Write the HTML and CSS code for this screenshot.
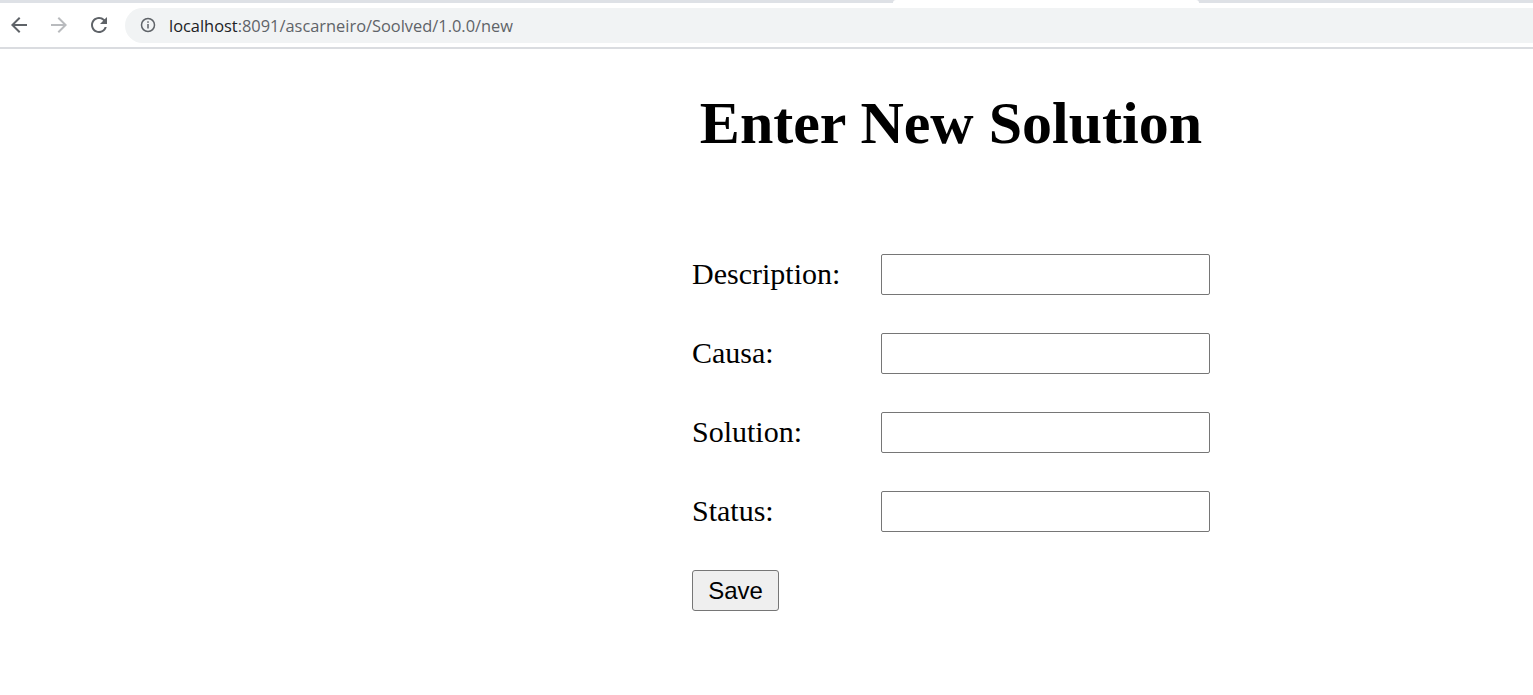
FILE: index.html
```html
<!DOCTYPE html>
<html>
<head>
<meta charset="utf-8">
<title>Enter New Solution</title>
<link rel="stylesheet" href="styles.css">
</head>
<body>
<div class="chrome">
  <div class="tabstrip">
    <div class="tab-left"></div>
    <div class="tab-active"></div>
    <div class="tab-right"></div>
  </div>
  <div class="toolbar">
    <div class="nav">
      <svg class="nav-icon" width="24" height="24" viewBox="0 0 24 24"><path d="M20 11H7.83l5.59-5.59L12 4l-8 8 8 8 1.41-1.41L7.83 13H20v-2z" fill="#5f6368"/></svg>
      <svg class="nav-icon" width="24" height="24" viewBox="0 0 24 24"><path d="M12 4l-1.41 1.41L16.17 11H4v2h12.17l-5.58 5.59L12 20l8-8z" fill="#b9bbbe"/></svg>
      <svg class="nav-icon" width="24" height="24" viewBox="0 0 24 24"><path d="M17.65 6.35A7.958 7.958 0 0 0 12 4c-4.42 0-7.990 3.58-7.990 8s3.570 8 7.990 8c3.73 0 6.840-2.550 7.730-6h-2.080A5.990 5.990 0 0 1 12 18c-3.310 0-6-2.690-6-6s2.690-6 6-6c1.660 0 3.140.690 4.220 1.780L13 11h7V4l-2.350 2.350z" fill="#5f6368"/></svg>
    </div>
    <div class="omnibox">
      <svg class="info" width="16" height="16" viewBox="0 0 16 16"><circle cx="8" cy="8" r="6.5" fill="none" stroke="#5f6368" stroke-width="1.5"/><rect x="7.25" y="7" width="1.5" height="4.5" fill="#5f6368"/><rect x="7.25" y="4.3" width="1.5" height="1.5" fill="#5f6368"/></svg>
      <span class="url"><span class="host">localhost</span>:8091/ascarneiro/Soolved/1.0.0/new</span>
    </div>
  </div>
</div>
<main class="page">
  <h1 class="title">Enter New Solution</h1>
  <form class="form">
    <div class="row"><label class="label">Description:</label><input class="field" type="text"></div>
    <div class="row"><label class="label">Causa:</label><input class="field" type="text"></div>
    <div class="row"><label class="label">Solution:</label><input class="field" type="text"></div>
    <div class="row"><label class="label">Status:</label><input class="field" type="text"></div>
    <div class="row"><button class="save" type="button">Save</button></div>
  </form>
</main>
</body>
</html>
```
FILE: styles.css
```css
html, body {
  margin: 0;
  padding: 0;
  background: #ffffff;
}
body {
  font-family: "Liberation Serif", "Times New Roman", serif;
  overflow: hidden;
}
.chrome {
  height: 49px;
  background: #ffffff;
}
.tabstrip {
  display: flex;
  height: 3px;
  background: #dee1e6;
}
.tab-left { width: 893px; }
.tab-active { width: 306px; background: #ffffff; border-radius: 6px 6px 0 0; }
.tab-right { flex: 1; }
.toolbar {
  display: flex;
  align-items: center;
  box-sizing: border-box;
  height: 46px;
  border-bottom: 2px solid #dadce0;
  padding-bottom: 0;
}
.nav {
  display: flex;
  align-items: center;
  gap: 16px;
  padding-left: 7px;
  width: 111px;
}
.nav-icon { display: block; }
.omnibox {
  flex: 1;
  height: 35px;
  margin-left: 7px;
  margin-right: -20px;
  background: #f1f3f4;
  border-radius: 18px;
  display: flex;
  align-items: center;
  padding-left: 15px;
}
.info { display: block; margin-right: 13px; }
.url {
  font-family: "Open Sans", "Noto Sans", sans-serif;
  font-size: 16.4px;
  color: #5f6368;
}
.host { color: #202124; }
.page {
  margin-left: 692px;
  width: 518px;
  display: flex;
  flex-direction: column;
}
.title {
  margin: 40px 0 0 0;
  font-size: 60px;
  line-height: 69px;
  font-weight: bold;
  text-align: center;
  color: #000;
}
.form {
  margin-top: 96px;
  display: flex;
  flex-direction: column;
  gap: 38px;
}
.row {
  display: flex;
  align-items: center;
  height: 41px;
}
.label {
  width: 189px;
  font-size: 30px;
  line-height: 34px;
  margin-top: -2px;
  color: #000;
}
.field {
  width: 329px;
  height: 41px;
  box-sizing: border-box;
  border: 1px solid #767676;
  border-radius: 2px;
  padding: 2px 4px;
  margin: 0;
  font-size: 24px;
}
.save {
  height: 41px;
  width: 87px;
  box-sizing: border-box;
  border: 1px solid #767676;
  border-radius: 3px;
  background: #efefef;
  font-family: "Liberation Sans", Arial, sans-serif;
  font-size: 24px;
  color: #000;
  padding: 0;
  margin: 0;
}
```
